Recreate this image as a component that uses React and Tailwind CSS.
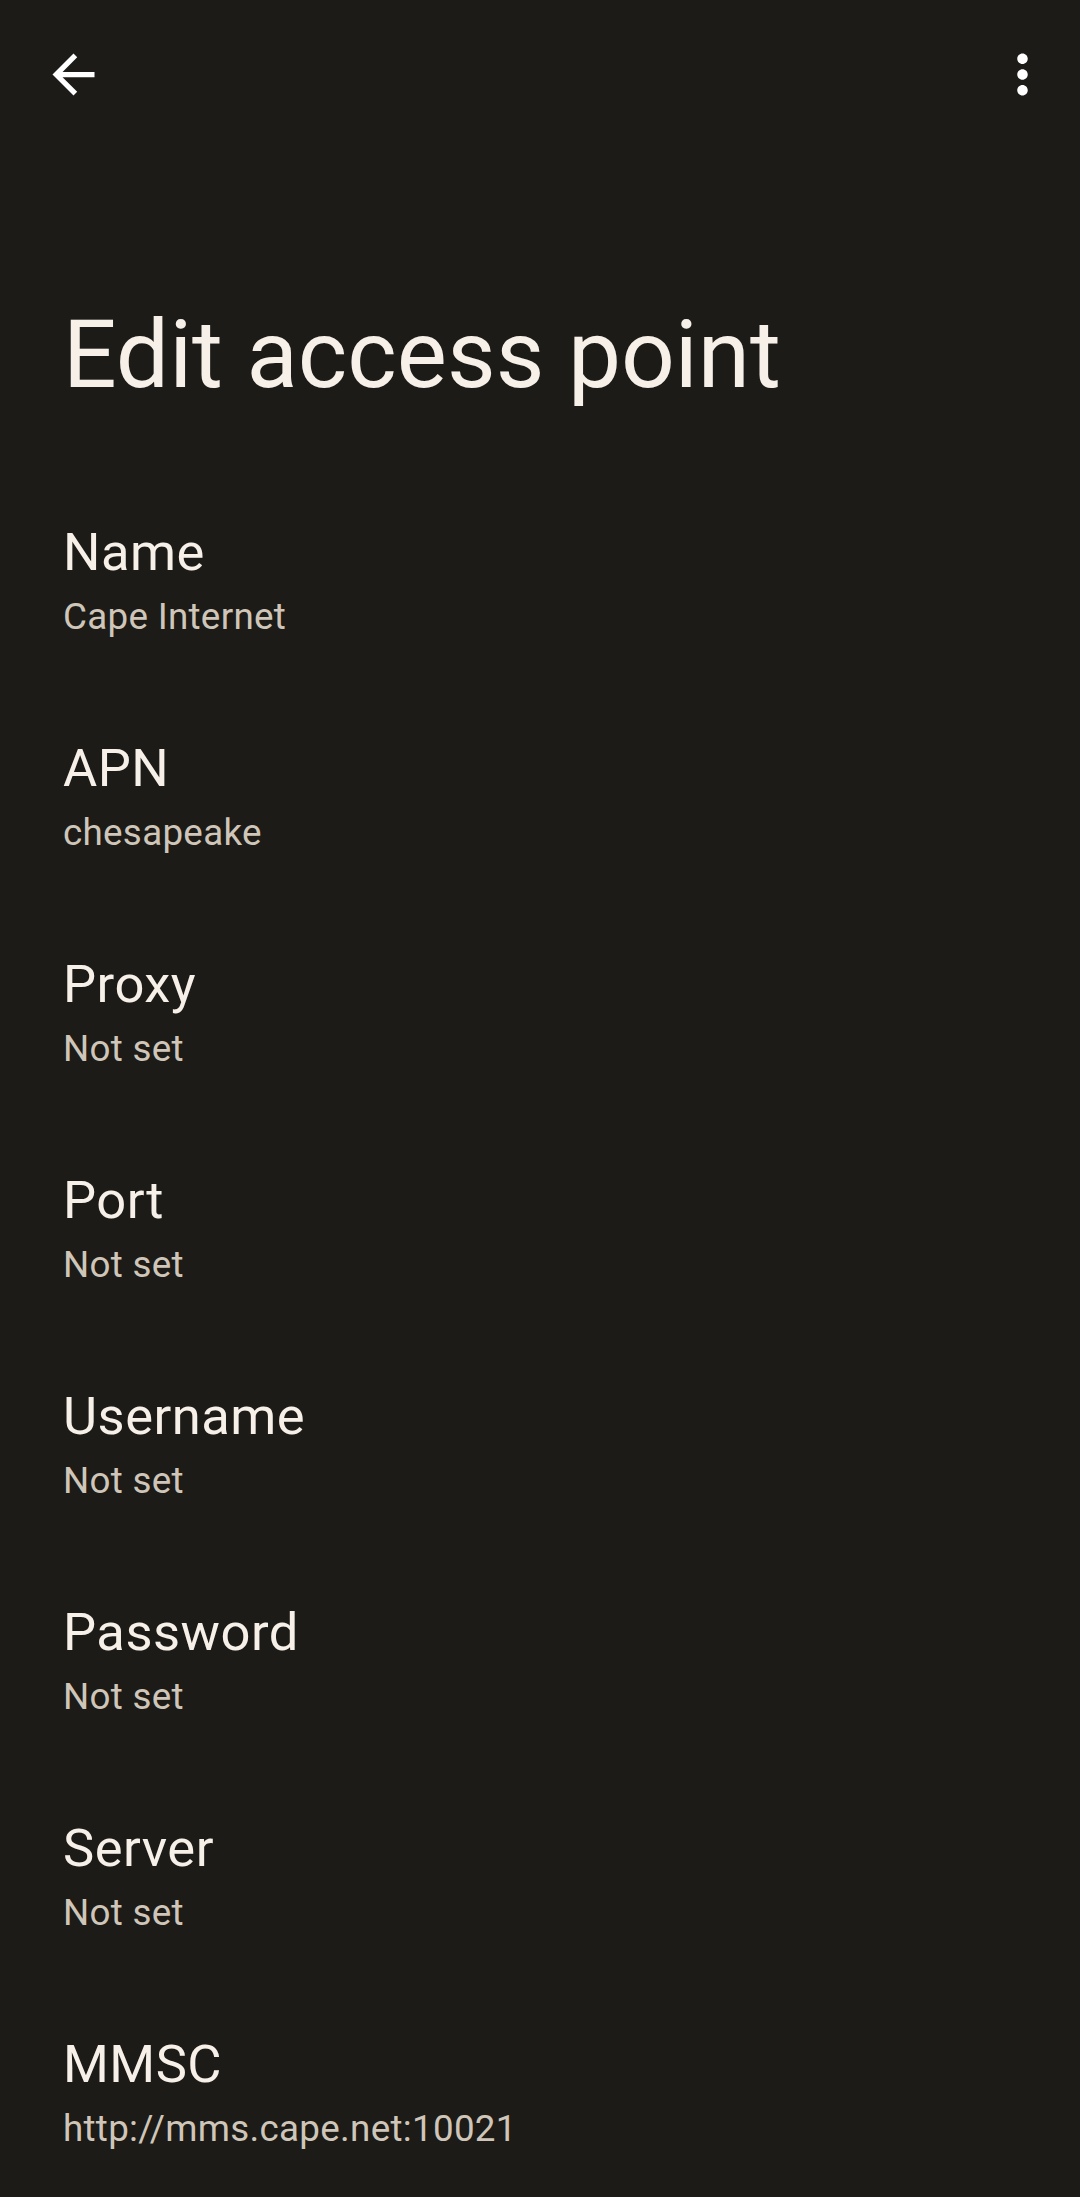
import React from 'react';

// Android-style "Edit access point" preference screen
const fields = [
  { label: 'Name', value: 'Cape Internet' },
  { label: 'APN', value: 'chesapeake' },
  { label: 'Proxy', value: 'Not set' },
  { label: 'Port', value: 'Not set' },
  { label: 'Username', value: 'Not set' },
  { label: 'Password', value: 'Not set' },
  { label: 'Server', value: 'Not set' },
  { label: 'MMSC', value: 'http://mms.cape.net:10021' },
];

function BackIcon() {
  return (
    <svg viewBox="0 0 24 24" className="w-[63px] h-[63px]" fill="#ffffff">
      <path d="M20 11H7.83l5.59-5.59L12 4l-8 8 8 8 1.41-1.41L7.83 13H20v-2z" />
    </svg>
  );
}

function MoreIcon() {
  return (
    <svg viewBox="0 0 24 24" className="w-[63px] h-[63px]" fill="#ffffff">
      <path d="M12 8c1.1 0 2-.9 2-2s-.9-2-2-2-2 .9-2 2 .9 2 2 2zm0 2c-1.1 0-2 .9-2 2s.9 2 2 2 2-.9 2-2-.9-2-2-2zm0 6c-1.1 0-2 .9-2 2s.9 2 2 2 2-.9 2-2-.9-2-2-2z" />
    </svg>
  );
}

export default function App() {
  return (
    <div
      className="min-h-[2197px] bg-[#1c1b17] text-[#f7f0e9]"
      style={{ fontFamily: 'Roboto, "Noto Sans", sans-serif' }}
    >
      <div className="h-[148px] flex items-center justify-between pl-[42px] pr-[26px]">
        <button className="shrink-0">
          <BackIcon />
        </button>
        <button className="shrink-0">
          <MoreIcon />
        </button>
      </div>

      <h1 className="mt-[150px] mb-[62px] px-[63px] text-[94.5px] leading-[113px] font-normal">
        Edit access point
      </h1>

      <div className="flex flex-col">
        {fields.map((f) => (
          <div key={f.label} className="px-[63px] pt-[47px] pb-[48px]">
            <div className="text-[52.5px] leading-[64px] tracking-[0.5px] text-[#f7f0e9]">{f.label}</div>
            <div className="mt-[9px] text-[36.75px] leading-[48px] tracking-[0.3px] text-[#cfc6b9]">{f.value}</div>
          </div>
        ))}
      </div>
    </div>
  );
}
